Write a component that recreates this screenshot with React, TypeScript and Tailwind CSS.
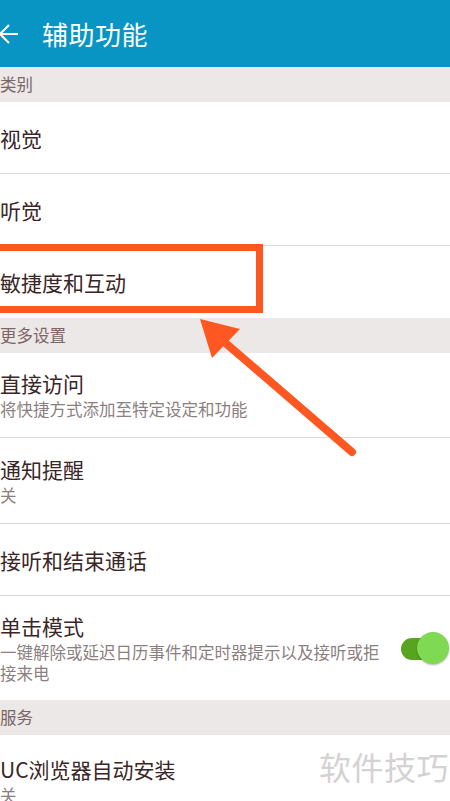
const font = { fontFamily: '"Noto Sans CJK SC", "Noto Sans", sans-serif' };

function Section({ label }: { label: string }) {
  return (
    <div className="flex h-[35px] items-center bg-[#ece8e8] text-[16.5px] text-[#7b6565]">
      {label}
    </div>
  );
}

function Row({
  title,
  sub,
  h,
  last,
  right,
}: {
  title: string;
  sub?: string;
  h: string;
  last?: boolean;
  right?: React.ReactNode;
}) {
  return (
    <div className={`flex items-center bg-white ${h} ${last ? "" : "border-b border-[#dcd8d8]"}`}>
      <div className="flex-1">
        <div className="text-[21px] leading-[30px] text-[#3a2626]">{title}</div>
        {sub && <div className="mt-[1px] text-[16.5px] leading-[21px] text-[#8c7f7f]">{sub}</div>}
      </div>
      {right}
    </div>
  );
}

function Toggle() {
  return (
    <div className="relative h-[33px] w-[50px]">
      <div className="absolute left-[2px] top-[6px] h-[22px] w-[42px] rounded-full bg-[#57a41f]" />
      <div className="absolute right-0 top-0 h-[32px] w-[32px] rounded-full bg-[#7fd952] shadow-[0_1px_2px_rgba(0,0,0,0.3)]" />
    </div>
  );
}

export default function App() {
  return (
    <div className="relative h-[801px] w-[450px] overflow-hidden bg-white" style={font}>
      <div className="flex h-[67px] items-center bg-[#0895c4] text-white">
        <svg width="22" height="22" viewBox="0 0 22 22" className="ml-[-2px]">
          <path d="M20 11H2M11 2L2 11l9 9" stroke="white" strokeWidth="2" fill="none" />
        </svg>
        <span className="ml-[22px] text-[26px] tracking-[0.5px]">辅助功能</span>
      </div>
      <Section label="类别" />
      <Row title="视觉" h="h-[72px]" />
      <Row title="听觉" h="h-[72px]" />
      <Row title="敏捷度和互动" h="h-[72px]" last />
      <Section label="更多设置" />
      <Row title="直接访问" sub="将快捷方式添加至特定设定和功能" h="h-[85px] pb-[3px]" />
      <Row title="通知提醒" sub="关" h="h-[86px] pb-[2px]" />
      <Row title="接听和结束通话" h="h-[72px]" />
      <Row
        title="单击模式"
        sub="一键解除或延迟日历事件和定时器提示以及接听或拒接来电"
        h="h-[104px] pr-[60px] pb-[2px]"
        last
        right={<div className="absolute right-[1px] top-[632px]"><Toggle /></div>}
      />
      <Section label="服务" />
      <Row title="UC浏览器自动安装" sub="关" h="h-[80px] pt-[10px]" last />

      {/* annotation */}
      <div className="absolute left-[-10px] top-[244px] h-[69px] w-[273px] border-[7px] border-[#ff5722]" />
      <svg className="absolute left-0 top-0" width="450" height="801">
        <line x1="352" y1="452" x2="215" y2="334" stroke="#ff5722" strokeWidth="8" strokeLinecap="round" />
        <polygon points="200,319 240,329 212,358" fill="#ff5722" />
      </svg>
      <div className="absolute left-[319px] top-[742px] whitespace-nowrap text-[32px] tracking-[0.5px] text-[#d4d2d2]">
        软件技巧
      </div>
    </div>
  );
}
